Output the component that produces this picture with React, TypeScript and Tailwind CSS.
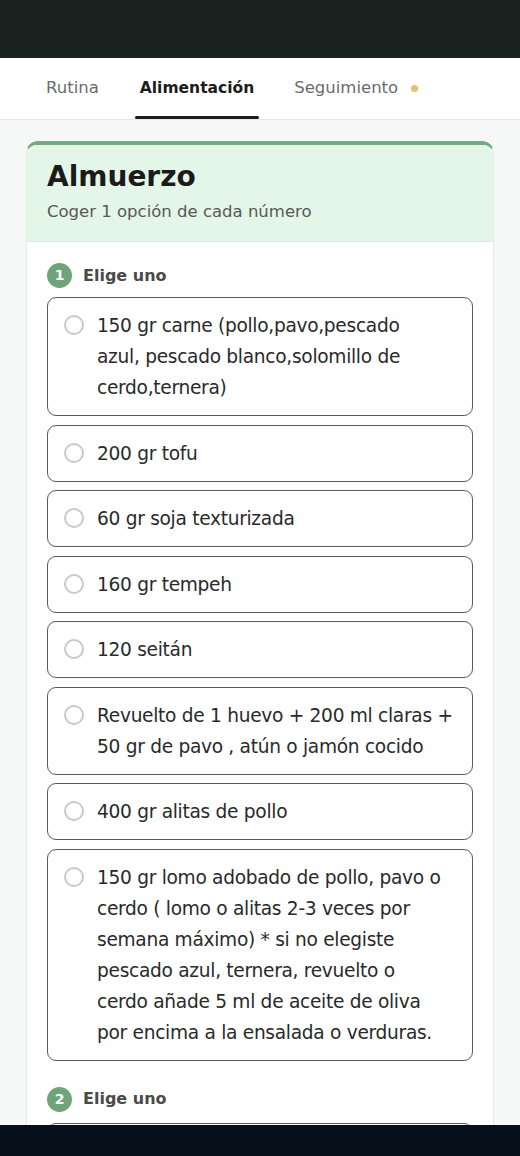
import React from "react";

const group1: string[][] = [
  ["150 gr carne (pollo,pavo,pescado", "azul, pescado blanco,solomillo de", "cerdo,ternera)"],
  ["200 gr tofu"],
  ["60 gr soja texturizada"],
  ["160 gr tempeh"],
  ["120 seitán"],
  ["Revuelto de 1 huevo + 200 ml claras +", "50 gr de pavo , atún o jamón cocido"],
  ["400 gr alitas de pollo"],
  [
    "150 gr lomo adobado de pollo, pavo o",
    "cerdo ( lomo o alitas 2-3 veces por",
    "semana máximo) * si no elegiste",
    "pescado azul, ternera, revuelto o",
    "cerdo añade 5 ml de aceite de oliva",
    "por encima a la ensalada o verduras.",
  ],
];

function Option({ lines }: { lines: string[] }) {
  return (
    <div className="flex items-start rounded-[9px] border border-[#5a5a5a] bg-white py-[12px] pl-[16px] pr-[8px]">
      <div className="mt-[5px] h-[20px] w-[20px] shrink-0 rounded-full border-2 border-[#c9c9c9]" />
      <div className="ml-[13px] text-[18.6px] leading-[31px] tracking-[-0.3px] text-[#2a2a2a]">
        {lines.map((l, i) => (
          <span key={i} className="block whitespace-nowrap">
            {l}
          </span>
        ))}
      </div>
    </div>
  );
}

function Header({ n }: { n: number }) {
  return (
    <div className="flex items-center gap-[11px]">
      <div className="flex h-[25px] w-[25px] items-center justify-center rounded-full bg-[#6fa47b] text-[14px] font-bold text-white">
        {n}
      </div>
      <div className="text-[16px] font-semibold text-[#4a4a4a]">Elige uno</div>
    </div>
  );
}

export default function App() {
  return (
    <div
      className="relative h-[1156px] w-[520px] overflow-hidden bg-[#f5f8f7]"
      style={{ fontFamily: '"DejaVu Sans", sans-serif' }}
    >
      <div className="h-[58px] bg-[#1a2220]" />
      <div className="flex h-[62px] items-stretch border-b border-[#e3e7e5] bg-white pl-[46px]">
        <div className="flex items-center text-[16.5px] text-[#6b6b6b]">Rutina</div>
        <div className="relative ml-[36px] flex items-center px-[5px] text-[15.5px] font-semibold text-[#1c1c1c]">
          Alimentación
          <div className="absolute bottom-0 left-0 right-0 h-[3px] rounded-full bg-[#1c1c1c]" />
        </div>
        <div className="ml-[35px] flex items-center text-[16.5px] text-[#6b6b6b]">
          Seguimiento
          <span className="ml-[13px] h-[7px] w-[7px] rounded-full bg-[#eac06c]" />
        </div>
      </div>
      <div className="px-[26px] pt-[21px]">
        <div className="overflow-hidden rounded-[12px] border-x border-[#e6ebe8] border-t-4 border-t-[#77a882] bg-white">
          <div className="border-b border-[#e0e7e2] bg-[#e3f6e7] px-[20px] pb-[18px] pt-[13px]">
            <div className="text-[28px] font-bold leading-[38px] text-[#1b1b1b]">Almuerzo</div>
            <div className="mt-[5px] text-[16.5px] leading-[22px] text-[#585858]">Coger 1 opción de cada número</div>
          </div>
          <div className="px-[20px] pt-[21px]">
            <Header n={1} />
            <div className="mt-[9px] flex flex-col gap-[8.5px]">
              {group1.map((t, i) => (
                <Option key={i} lines={t} />
              ))}
            </div>
            <div className="mt-[26px]">
              <Header n={2} />
            </div>
            <div className="mt-[11px] flex flex-col gap-[8px]">
              <div className="h-[57px] rounded-[9px] border border-[#5a5a5a] bg-white" />
            </div>
          </div>
        </div>
      </div>
      <div className="absolute bottom-0 left-0 right-0 h-[31px] bg-[#07101a]" />
    </div>
  );
}
